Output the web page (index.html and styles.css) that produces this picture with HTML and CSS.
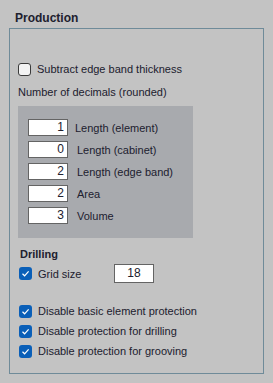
FILE: index.html
```html
<!DOCTYPE html>
<html lang="en">
<head>
  <meta charset="UTF-8">
  <title>Production</title>
  <link rel="stylesheet" href="styles.css">
</head>
<body>
  <div class="title">Production</div>
  <div class="group">
    <div class="check-row first">
      <span class="box"></span>
      <span>Subtract edge band thickness</span>
    </div>
    <div class="caption">Number of decimals (rounded)</div>
    <div class="panel">
      <div class="num-row"><span class="num">1</span><span class="lbl tight">Length (element)</span></div>
      <div class="num-row"><span class="num">0</span><span class="lbl">Length (cabinet)</span></div>
      <div class="num-row"><span class="num">2</span><span class="lbl">Length (edge band)</span></div>
      <div class="num-row"><span class="num">2</span><span class="lbl">Area</span></div>
      <div class="num-row"><span class="num">3</span><span class="lbl">Volume</span></div>
    </div>
    <div class="section">Drilling</div>
    <div class="grid-row">
      <span class="box checked"><svg viewBox="0 0 13 13"><path d="M3.5 6.8 L5.6 8.8 L9.6 4.4" /></svg></span>
      <span class="grid-lbl">Grid size</span>
      <span class="grid-input">18</span>
    </div>
    <div class="checks">
      <div class="check-row"><span class="box checked"><svg viewBox="0 0 13 13"><path d="M3.5 6.8 L5.6 8.8 L9.6 4.4" /></svg></span><span>Disable basic element protection</span></div>
      <div class="check-row"><span class="box checked"><svg viewBox="0 0 13 13"><path d="M3.5 6.8 L5.6 8.8 L9.6 4.4" /></svg></span><span>Disable protection for drilling</span></div>
      <div class="check-row"><span class="box checked"><svg viewBox="0 0 13 13"><path d="M3.5 6.8 L5.6 8.8 L9.6 4.4" /></svg></span><span>Disable protection for grooving</span></div>
    </div>
  </div>
</body>
</html>
```
FILE: styles.css
```css
body {
  margin: 0;
  background-color: #c3c3c3;
  font-family: 'Liberation Sans', Arial, sans-serif;
  font-size: 11px;
  line-height: 14px;
  color: #20202e;
}
.title {
  font-weight: bold;
  font-size: 12px;
  padding: 11px 0 0 15px;
  height: 17px;
}
.group {
  margin: 0 9px 0 9px;
  height: 344px;
  border: 1px solid #6f8b99;
  padding-left: 8px;
}
.check-row {
  display: flex;
  align-items: center;
  gap: 6px;
  height: 20px;
}
.check-row.first {
  margin-top: 30px;
}
.box {
  box-sizing: border-box;
  width: 13px;
  height: 13px;
  border: 1px solid #3a3a3a;
  border-radius: 3px;
  background-color: #f3f3f3;
  flex: none;
}
.box.checked {
  border: none;
  background-color: #0a5fb8;
}
.box svg {
  display: block;
  width: 13px;
  height: 13px;
}
.box svg path {
  fill: none;
  stroke: #ffffff;
  stroke-width: 1.2;
}
.caption {
  margin-top: 6px;
}
.panel {
  margin-top: 7px;
  width: 165px;
  height: 105px;
  padding: 13px 0 14px 10px;
  background-color: #a8aaae;
  display: flex;
  flex-direction: column;
  gap: 5px;
}
.num-row {
  display: flex;
  align-items: center;
  gap: 9px;
  height: 17px;
}
.num {
  box-sizing: border-box;
  width: 40px;
  height: 17px;
  border: 1px solid #646464;
  background-color: #ffffff;
  text-align: right;
  padding-right: 3px;
  font-size: 12px;
  line-height: 15px;
}
.lbl.tight {
  margin-left: -2px;
}
.section {
  font-weight: bold;
  margin-top: 9px;
  padding-left: 2px;
}
.grid-row {
  display: flex;
  align-items: center;
  margin-top: 3px;
  height: 19px;
  padding-left: 1px;
}
.grid-lbl {
  margin-left: 6px;
  width: 76px;
}
.grid-input {
  box-sizing: border-box;
  width: 40px;
  height: 19px;
  border: 1px solid #646464;
  background-color: #ffffff;
  text-align: center;
  font-size: 12px;
  line-height: 17px;
}
.checks {
  margin-top: 18px;
  padding-left: 1px;
}
```
